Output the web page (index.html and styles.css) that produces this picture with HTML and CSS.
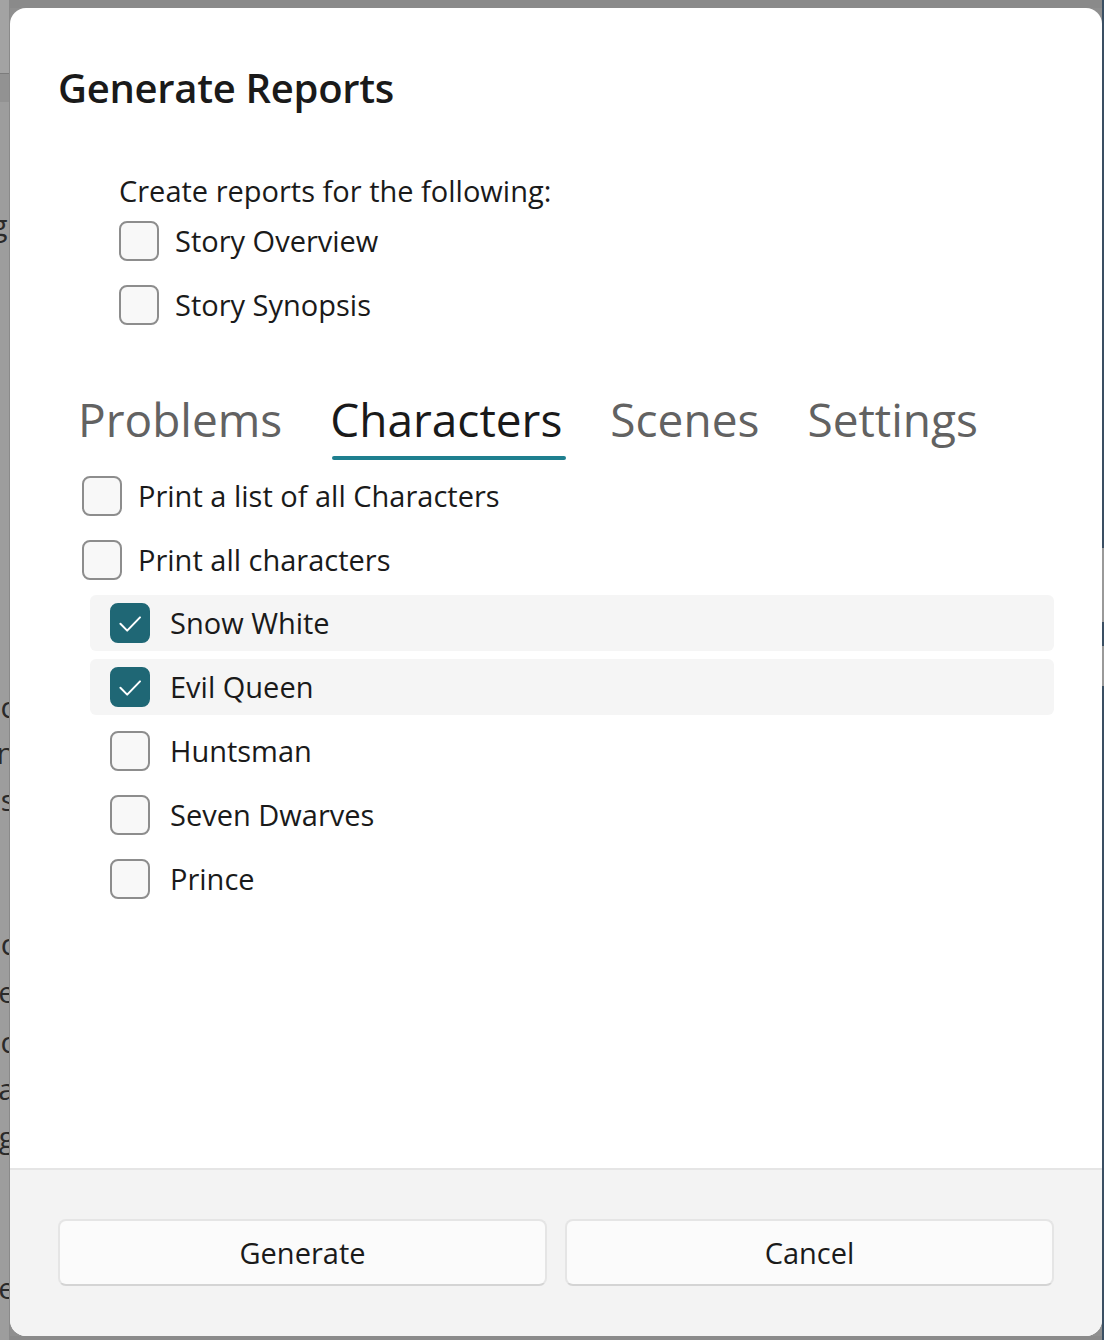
FILE: index.html
```html
<!DOCTYPE html>
<html lang="en">
<head>
<meta charset="utf-8">
<title>Generate Reports</title>
<link rel="stylesheet" href="styles.css">
</head>
<body>
<div class="screen">
  <div class="left-strip">
    <div class="strip-top"></div>
    <div class="strip-band"></div>
    <div class="strip-text">
      <span class="frag f1">gl</span>
      <span class="frag f2">ac</span>
      <span class="frag f3">n</span>
      <span class="frag f4">s</span>
      <span class="frag f5">i</span>
      <span class="frag f6">c</span>
      <span class="frag f7">e</span>
      <span class="frag f8">ac</span>
      <span class="frag f9">a</span>
      <span class="frag f10">g</span>
      <span class="frag f11">i</span>
      <span class="frag f12">e</span>
    </div>
  </div>
  <div class="center">
    <div class="top-strip"></div>
    <div class="dialog">
      <div class="content">
        <h1 class="title">Generate Reports</h1>
        <div class="options">
          <div class="options-label">Create reports for the following:</div>
          <label class="check-row"><span class="box"></span><span class="label">Story Overview</span></label>
          <label class="check-row"><span class="box"></span><span class="label">Story Synopsis</span></label>
        </div>
        <div class="tabs">
          <div class="tab">Problems</div>
          <div class="tab active">Characters</div>
          <div class="tab">Scenes</div>
          <div class="tab">Settings</div>
        </div>
        <div class="tab-body">
          <label class="check-row"><span class="box"></span><span class="label">Print a list of all Characters</span></label>
          <label class="check-row"><span class="box"></span><span class="label">Print all characters</span></label>
          <div class="char-list">
            <div class="char-row selected"><span class="box checked"><svg viewBox="0 0 20 20" width="40" height="40"><path d="M5.2 10.4 L8.6 13.8 L15 7.2" fill="none" stroke="#ffffff" stroke-width="1" stroke-linecap="round" stroke-linejoin="round"/></svg></span><span class="label">Snow White</span></div>
            <div class="char-row selected"><span class="box checked"><svg viewBox="0 0 20 20" width="40" height="40"><path d="M5.2 10.4 L8.6 13.8 L15 7.2" fill="none" stroke="#ffffff" stroke-width="1" stroke-linecap="round" stroke-linejoin="round"/></svg></span><span class="label">Evil Queen</span></div>
            <div class="char-row"><span class="box"></span><span class="label">Huntsman</span></div>
            <div class="char-row"><span class="box"></span><span class="label">Seven Dwarves</span></div>
            <div class="char-row"><span class="box"></span><span class="label">Prince</span></div>
          </div>
        </div>
      </div>
      <div class="footer">
        <button class="btn">Generate</button>
        <button class="btn">Cancel</button>
      </div>
    </div>
    <div class="bottom-strip"></div>
  </div>
  <div class="right-strip">
    <div class="rs-a"></div>
    <div class="rs-b"></div>
    <div class="rs-c"></div>
    <div class="rs-d"></div>
  </div>
</div>
</body>
</html>
```

FILE: styles.css
```css
* { box-sizing: border-box; }

html, body {
  margin: 0;
  padding: 0;
}

body {
  width: 1104px;
  height: 1340px;
  overflow: hidden;
  background: #8f8f8f;
  font-family: "Open Sans", "Noto Sans", "Liberation Sans", sans-serif;
  color: #1a1a1a;
}

.screen {
  display: flex;
  width: 1104px;
  height: 1340px;
}

/* Background app, dimmed */
.left-strip {
  width: 10px;
  flex: none;
  background: #9d9d9d;
  border-right: 1px solid #8a8a8a;
  display: flex;
  flex-direction: column;
  overflow: hidden;
}

.strip-top {
  height: 74px;
  background: #a3a3a3;
  border-bottom: 1px solid #7c7c7c;
  flex: none;
}

.strip-band {
  height: 28px;
  background: #929292;
  flex: none;
}

.strip-text {
  display: flex;
  flex-direction: column;
  align-items: flex-end;
  font-size: 30px;
  line-height: 1;
  color: #2a2a2a;
  margin-right: -6px;
}

.frag { display: block; height: 30px; }
.f1 { margin-top: 108px; }
.f2 { margin-top: 452px; }
.f3 { margin-top: 16px; }
.f4 { margin-top: 17px; }
.f5 { margin-top: 66px; }
.f6 { margin-top: 18px; }
.f7 { margin-top: 18px; }
.f8 { margin-top: 20px; }
.f9 { margin-top: 17px; }
.f10 { margin-top: 18px; }
.f11 { margin-top: 17px; }
.f12 { margin-top: 74px; }

.center {
  width: 1092px;
  flex: none;
  display: flex;
  flex-direction: column;
}

.top-strip {
  height: 8px;
  flex: none;
  background: #8a8a8a;
}

.bottom-strip {
  height: 4px;
  flex: none;
  background: #8a8a8a;
}

.right-strip {
  width: 2px;
  flex: none;
  display: flex;
  flex-direction: column;
  background: #3a4f63;
}
.rs-a { height: 548px; background: #3a4f63; }
.rs-b { height: 74px; background: #9a9a9a; }
.rs-c { height: 24px; background: #3a4f63; }
.rs-d { height: 40px; background: #9a9a9a; }

/* Dialog */
.dialog {
  height: 1328px;
  flex: none;
  background: #ffffff;
  border-radius: 16px;
  display: flex;
  flex-direction: column;
  overflow: hidden;
}

.content {
  flex: 1;
  padding: 54px 48px 0 48px;
}

.title {
  margin: 0;
  font-size: 40px;
  font-weight: 600;
  line-height: 52px;
  letter-spacing: -0.3px;
  color: #1a1a1a;
}

.options {
  margin: 59px 0 0 61px;
}

.options-label {
  font-size: 29px;
  line-height: 36px;
  height: 36px;
}

.check-row {
  display: flex;
  align-items: center;
  gap: 16px;
  height: 64px;
}

.box {
  width: 40px;
  height: 40px;
  flex: none;
  border: 2px solid #8d8d8d;
  border-radius: 8px;
  background: #f8f8f8;
  display: flex;
}

.box.checked {
  background: #1f6775;
  border-color: #1f6775;
}

.box.checked svg {
  margin: -2px;
}

.label {
  font-size: 29px;
  line-height: 36px;
  color: #1a1a1a;
}

/* Tabs */
.tabs {
  display: flex;
  margin: 47px 0 0 20px;
  gap: 48px;
  height: 80px;
}

.tab {
  font-size: 46px;
  line-height: 64px;
  font-weight: 400;
  color: #626262;
  position: relative;
  height: 80px;
  padding-top: 3px;
}

.tab.active {
  color: #1a1a1a;
}

.tab.active::after {
  content: "";
  position: absolute;
  left: 2px;
  right: -4px;
  top: 72px;
  height: 4px;
  border-radius: 2px;
  background: #1e7f8f;
}

.tab-body {
  margin: 0 0 0 24px;
}

.char-list {
  margin: 3px 0 0 8px;
  display: flex;
  flex-direction: column;
  gap: 8px;
}

.char-row {
  height: 56px;
  display: flex;
  align-items: center;
  gap: 20px;
  padding-left: 20px;
  border-radius: 6px;
}

.char-row.selected {
  background: #f5f5f5;
}

/* Footer */
.footer {
  height: 168px;
  flex: none;
  background: #f3f3f3;
  border-top: 2px solid #e5e5e5;
  display: flex;
  gap: 18px;
  padding: 49px 48px 0 48px;
}

.btn {
  flex: 1;
  height: 67px;
  background: #fbfbfb;
  border: 2px solid #e5e5e5;
  border-bottom-color: #d4d4d4;
  border-radius: 8px;
  font-family: "Open Sans", "Noto Sans", "Liberation Sans", sans-serif;
  font-size: 29px;
  color: #1a1a1a;
  padding: 0;
}
```
